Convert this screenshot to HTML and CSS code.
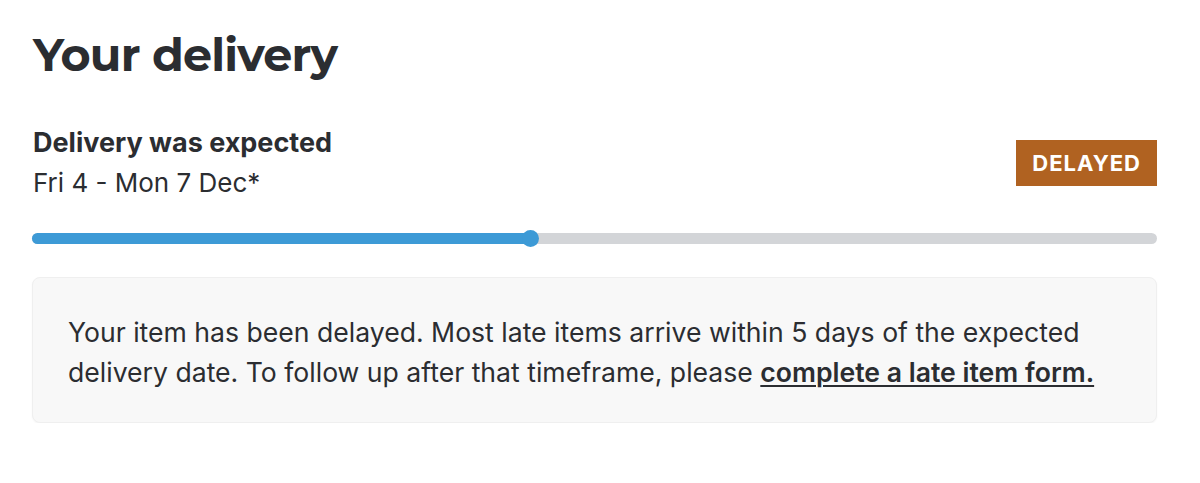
FILE: index.html
```html
<!DOCTYPE html>
<html lang="en">
<head>
<meta charset="utf-8">
<link rel="stylesheet" href="styles.css">
</head>
<body>
<main class="page">
  <h1 class="title">Your delivery</h1>
  <div class="status-row">
    <div class="status-text">
      <div class="status-label">Delivery was expected</div>
      <div class="status-date">Fri 4 - Mon 7 Dec*</div>
    </div>
    <span class="badge">DELAYED</span>
  </div>
  <div class="progress">
    <div class="progress-fill" style="width: 44.27%"><span class="progress-dot"></span></div>
  </div>
  <div class="notice">
    <p>Your item has been delayed. Most late items arrive within 5 days of the expected delivery date. To follow up after that timeframe, please <a href="#" class="notice-link">complete a late item form.</a></p>
  </div>
</main>
</body>
</html>
```
FILE: styles.css
```css
* { box-sizing: border-box; }
html, body { margin: 0; background: #fff; }
body {
  font-family: Inter, "Noto Sans", sans-serif;
  color: #2b2d31;
}
.page {
  padding: 28px 43px 0 32px;
}
.title {
  margin: 0 0 0 1px;
  font-family: Montserrat, "Open Sans", sans-serif;
  font-weight: 700;
  font-size: 46px;
  line-height: 54px;
  letter-spacing: -0.8px;
  color: #2b2d31;
}
.status-row {
  display: flex;
  justify-content: space-between;
  align-items: center;
  margin-top: 43px;
  padding-left: 1px;
}
.status-label {
  font-weight: 700;
  font-size: 27px;
  line-height: 36px;
}
.status-date {
  margin-top: 4px;
  font-size: 26px;
  line-height: 36px;
}
.badge {
  background: #b06221;
  color: #fff;
  font-weight: 700;
  font-size: 22px;
  letter-spacing: 1px;
  padding: 10px 16px;
  line-height: 26px;
}
.progress {
  margin-top: 32px;
  height: 11px;
  border-radius: 6px;
  background: #d3d5d8;
}
.progress-fill {
  height: 100%;
  background: #3d9ad6;
  border-radius: 6px;
  position: relative;
}
.progress-dot {
  position: absolute;
  right: -8.5px;
  top: 50%;
  width: 17px;
  height: 17px;
  margin-top: -8.5px;
  border-radius: 50%;
  background: #3d9ad6;
}
.notice {
  margin-top: 33px;
  background: #f8f8f8;
  border: 1px solid #efefef;
  border-radius: 8px;
  padding: 34px 35px 30px;
  box-shadow: 0 1px 2px rgba(0, 0, 0, 0.04);
}
.notice p {
  margin: 0;
  font-size: 26.6px;
  line-height: 40px;
  color: #2b2d31;
}
.notice-link {
  color: #2b2d31;
  font-weight: 600;
  text-decoration: underline;
  text-underline-offset: 3px;
  text-decoration-thickness: 2px;
}
```
